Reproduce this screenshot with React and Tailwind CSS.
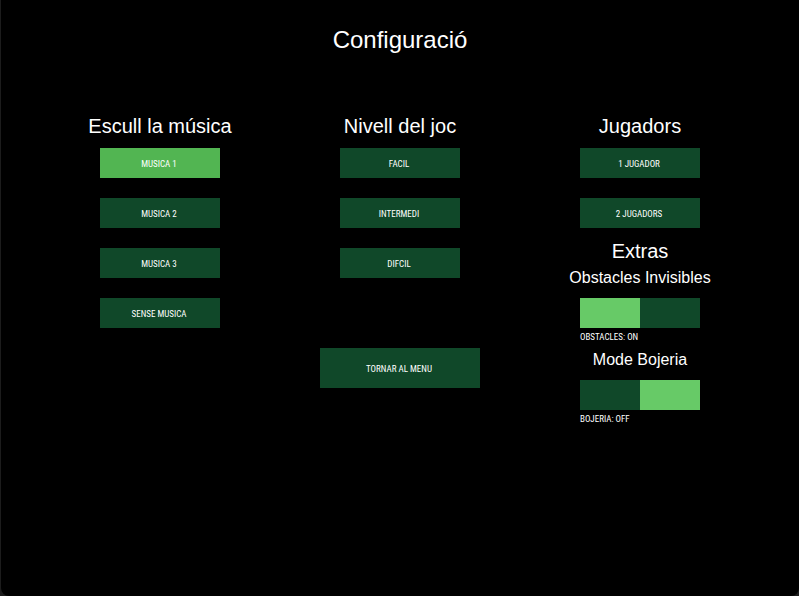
import { useState } from "react";
import clsx from "clsx";

const pixelText =
  "font-['Roboto_Condensed','Liberation_Sans_Narrow','Open_Sans_Condensed',Roboto,sans-serif] text-[9px] leading-3 uppercase text-white";

function MenuButton({ active, className, children, ...props }) {
  return (
    <button
      type="button"
      className={clsx(
        pixelText,
        "flex items-center justify-center pt-0.5 pr-0.5",
        active ? "bg-[#52b552]" : "bg-[#104829]",
        className || "h-[30px] w-[120px]"
      )}
      {...props}
    >
      {children}
    </button>
  );
}

function Options({ title, items, selected, onSelect }) {
  return (
    <section className="flex flex-col items-center">
      <h2 className="text-xl leading-6 whitespace-nowrap">{title}</h2>
      <div className="mt-2.5 flex flex-col gap-5">
        {items.map((item, i) => (
          <MenuButton key={item} active={selected === i} aria-pressed={selected === i} onClick={() => onSelect(i)}>
            {item}
          </MenuButton>
        ))}
      </div>
    </section>
  );
}

function Toggle({ id, title, name, initial }) {
  const [on, setOn] = useState(initial);
  return (
    <div className="flex flex-col items-center">
      <h3 className="text-base leading-5 whitespace-nowrap">{title}</h3>
      <div className="mt-2.5 flex w-[120px] flex-col">
        <input
          id={id}
          type="checkbox"
          role="switch"
          checked={on}
          onChange={() => setOn(!on)}
          className="h-[30px] w-full appearance-none bg-[linear-gradient(90deg,#104829_50%,#67ca67_50%)] checked:bg-[linear-gradient(90deg,#67ca67_50%,#104829_50%)]"
        />
        <label htmlFor={id} className={clsx(pixelText, "pt-[3px]")}>
          {name}: {on ? "ON" : "OFF"}
        </label>
      </div>
    </div>
  );
}

export default function App() {
  const [music, setMusic] = useState(0);
  const [level, setLevel] = useState(null);
  const [players, setPlayers] = useState(null);

  return (
    <div className="flex min-h-screen bg-[#1c1c1c] pl-px font-['Liberation_Sans',Arial,sans-serif] text-white">
      <main className="flex-1 rounded-b-lg bg-black pt-[26px] pr-[39px] pl-[39px]">
        <h1 className="text-center text-2xl leading-7">Configuració</h1>
        <div className="mt-[60px] grid grid-cols-3">
          <Options
            title="Escull la música"
            items={["Musica 1", "Musica 2", "Musica 3", "Sense musica"]}
            selected={music}
            onSelect={setMusic}
          />
          <div className="flex flex-col items-center">
            <Options
              title="Nivell del joc"
              items={["Facil", "Intermedi", "Difcil"]}
              selected={level}
              onSelect={setLevel}
            />
            <MenuButton className="mt-[70px] h-10 w-40">Tornar al menu</MenuButton>
          </div>
          <div className="flex flex-col items-center">
            <Options
              title="Jugadors"
              items={["1 jugador", "2 jugadors"]}
              selected={players}
              onSelect={setPlayers}
            />
            <h2 className="mt-[11px] text-xl leading-6">Extras</h2>
            <div className="mt-[5px] flex flex-col gap-[7px]">
              <Toggle id="obstacles" title="Obstacles Invisibles" name="Obstacles" initial={true} />
              <Toggle id="bojeria" title="Mode Bojeria" name="Bojeria" initial={false} />
            </div>
          </div>
        </div>
      </main>
    </div>
  );
}
